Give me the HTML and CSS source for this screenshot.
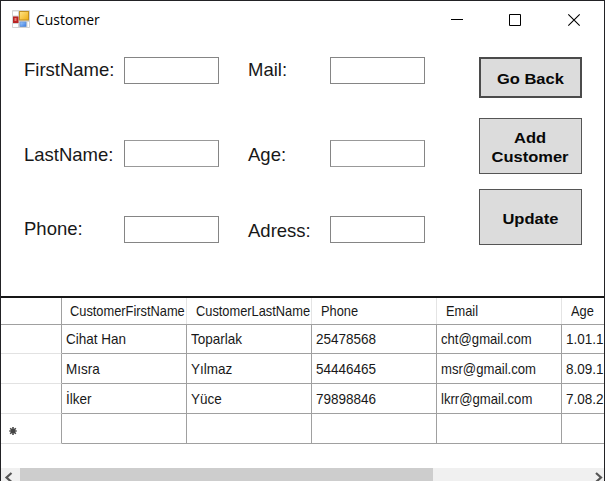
FILE: index.html
```html
<!DOCTYPE html>
<html lang="en">
<head>
<meta charset="utf-8">
<title>Customer</title>
<link rel="stylesheet" href="styles.css">
</head>
<body>
<div class="window">
  <header class="titlebar">
    <svg class="app-icon" width="18" height="18" viewBox="0 0 18 18">
      <defs>
        <linearGradient id="gold" x1="0" y1="0" x2="1" y2="1"><stop stop-color="#ffe58a"/><stop offset="1" stop-color="#eead12"/></linearGradient>
        <linearGradient id="blue" x1="0" y1="0" x2="1" y2="1"><stop stop-color="#a5ceff"/><stop offset="1" stop-color="#397be0"/></linearGradient>
      </defs>
      <rect width="18" height="18" rx="1" fill="#d3d3d3"/>
      <path d="M1 1.500H6V5.500H1zM1 14H6V17H1z" fill="#fff"/>
      <rect x="1" y="6.500" width="5.500" height="6.500" fill="#b92323"/>
      <rect x="2.500" y="8" width="2" height="3" fill="#e47b70"/>
      <rect x="7.500" y="1.500" width="9" height="8.500" fill="url(#gold)" stroke="#c18f20"/>
      <rect x="8" y="12" width="6" height="4.500" fill="url(#blue)" stroke="#5b8ed8" stroke-width=".7"/>
      <path d="M15.500 12H17V17H15.500z" fill="#fff"/>
    </svg>
    <span class="title">Customer</span>
    <svg class="controls" width="125" height="14" viewBox="0 0 125 14" fill="none" stroke="#000">
      <path d="M0 6.500H12M58.500 1.500H69.500V12.500H58.500z"/>
      <path d="M117.300 1.300L128.700 12.700M128.700 1.300L117.300 12.700" stroke-width="1.100"/>
    </svg>
  </header>
  <main class="form">
    <section class="fields">
      <label class="label" for="first">FirstName:</label><input id="first" class="box">
      <label class="label second" for="mail">Mail:</label><input id="mail" class="box">
      <label class="label mid" for="last">LastName:</label><input id="last" class="box tall">
      <label class="label second mid" for="age">Age:</label><input id="age" class="box tall">
      <label class="label" for="phone">Phone:</label><input id="phone" class="box">
      <label class="label second low" for="adress">Adress:</label><input id="adress" class="box">
    </section>
    <section class="actions">
      <button class="btn focused"><span>Go Back</span></button>
      <button class="btn"><span>Add<br>Customer</span></button>
      <button class="btn"><span>Update</span></button>
    </section>
  </main>
  <section class="data">
    <div class="row head"><div></div><div><span>CustomerFirstName</span></div><div><span>CustomerLastName</span></div><div><span>Phone</span></div><div><span>Email</span></div><div><span>Age</span></div></div>
    <div class="row"><div></div><div><span>Cihat Han</span></div><div><span>Toparlak</span></div><div><span>25478568</span></div><div><span class="mail">cht@gmail.com</span></div><div><span>1.01.1</span></div></div>
    <div class="row"><div></div><div><span>Mısra</span></div><div><span>Yılmaz</span></div><div><span>54446465</span></div><div><span class="mail">msr@gmail.com</span></div><div><span>8.09.1</span></div></div>
    <div class="row"><div></div><div><span>İlker</span></div><div><span>Yüce</span></div><div><span>79898846</span></div><div><span class="mail">lkrr@gmail.com</span></div><div><span>7.08.2</span></div></div>
    <div class="row"><div class="new-row"><svg width="8" height="8" viewBox="0 0 8 8" stroke="#444" stroke-width="1.600"><path d="M4 0V8M.3 4H7.700M1.200 1.200L6.800 6.800M6.800 1.200L1.200 6.800"/></svg></div><div></div><div></div><div></div><div></div><div></div></div>
  </section>
  <footer class="scrollbar">
    <svg width="19" height="13" viewBox="0 0 19 13" fill="none" stroke="#555" stroke-width="2.200"><path d="M10.500 5L5.500 9.500L10.500 14"/></svg>
    <div class="thumb"></div>
    <svg class="right" width="10" height="13" viewBox="0 0 10 13" fill="none" stroke="#555" stroke-width="2.200"><path d="M2 5L7 9.500L2 14"/></svg>
  </footer>
</div>
</body>
</html>
```
FILE: styles.css
```css
* { box-sizing: border-box; }
body { margin: 0; background: #fff; color: #181818; font-family: "Liberation Sans", sans-serif; }
.window {
  width: 605px; height: 481px; overflow: hidden;
  display: flex; flex-direction: column;
  border: 1px solid #222225; border-bottom: 0;
}
.titlebar { height: 38px; display: flex; align-items: center; padding-left: 11px; flex: none; }
.app-icon { margin-top: -2px; }
.title {
  margin-left: 6px; width: 70px; color: #000;
  font: 14.5px/20px "Open Sans", sans-serif;
  transform: scaleX(.96); transform-origin: left;
}
.controls { margin-left: 345px; overflow: visible; }
.form { height: 257px; display: flex; flex: none; padding: 18px 0 0 23px; }
.fields {
  width: 455px; display: grid; align-content: start;
  grid-template-columns: 100px 95px 111px 95px;
  grid-template-rows: 83px 76px 30px;
}
.label { font-size: 18.500px; line-height: 26px; white-space: nowrap; }
.label.second { padding-left: 29px; }
.label.mid { padding-top: 2px; }
.label.low { padding-top: 2px; }
.box { width: 95px; height: 27px; border: 1px solid #858585; background: #fff; padding: 0; margin: 0; }
.box.tall { border-top-color: #999; border-bottom-color: #999; }
.actions { width: 103px; display: flex; flex-direction: column; }
.btn {
  width: 103px; height: 56px; padding: 2px 0 0; margin: 0 0 15px;
  background: #dcdcdc; border: 1px solid #555; border-radius: 0;
  color: #080808; font: bold 15px/19px "Liberation Sans", sans-serif;
}
.btn span { display: inline-block; transform: scaleX(1.1); }
.btn.focused { height: 41px; border: 2px solid #4b4b4b; margin-bottom: 20px; }
.data { height: 172px; flex: none; border-top: 2px solid #161616; overflow: hidden; }
.row {
  width: 686px; height: 30px; display: grid;
  grid-template-columns: 61px 125px 125px 125px 125px 125px;
}
.row > div {
  border-right: 1px solid #a0a0a0; border-bottom: 1px solid #a0a0a0;
  padding-left: 4px; line-height: 29px; font-size: 15px; white-space: nowrap;
}
.row > div:first-child { border-bottom-color: #e2e2e2; }
.row span { display: inline-block; transform: scaleX(.9); transform-origin: left; }
.row .mail { transform: scaleX(.875); }
.head { height: 26px; }
.head > div { padding-left: 9px; line-height: 26px; border-right-color: #e4e4e4; }
.head > div:nth-child(2) { padding-left: 8px; }
.head > div:first-child { border-right-color: #a0a0a0; border-bottom-color: #a0a0a0; }
.head span { transform: scaleX(.855); }
.row .new-row { display: flex; align-items: center; padding: 4px 0 0 8px; }
.scrollbar { height: 13px; display: flex; background: #f0f0f0; flex: none; }
.thumb { width: 413px; background: #cdcdcd; }
.right { margin-left: auto; }
```
